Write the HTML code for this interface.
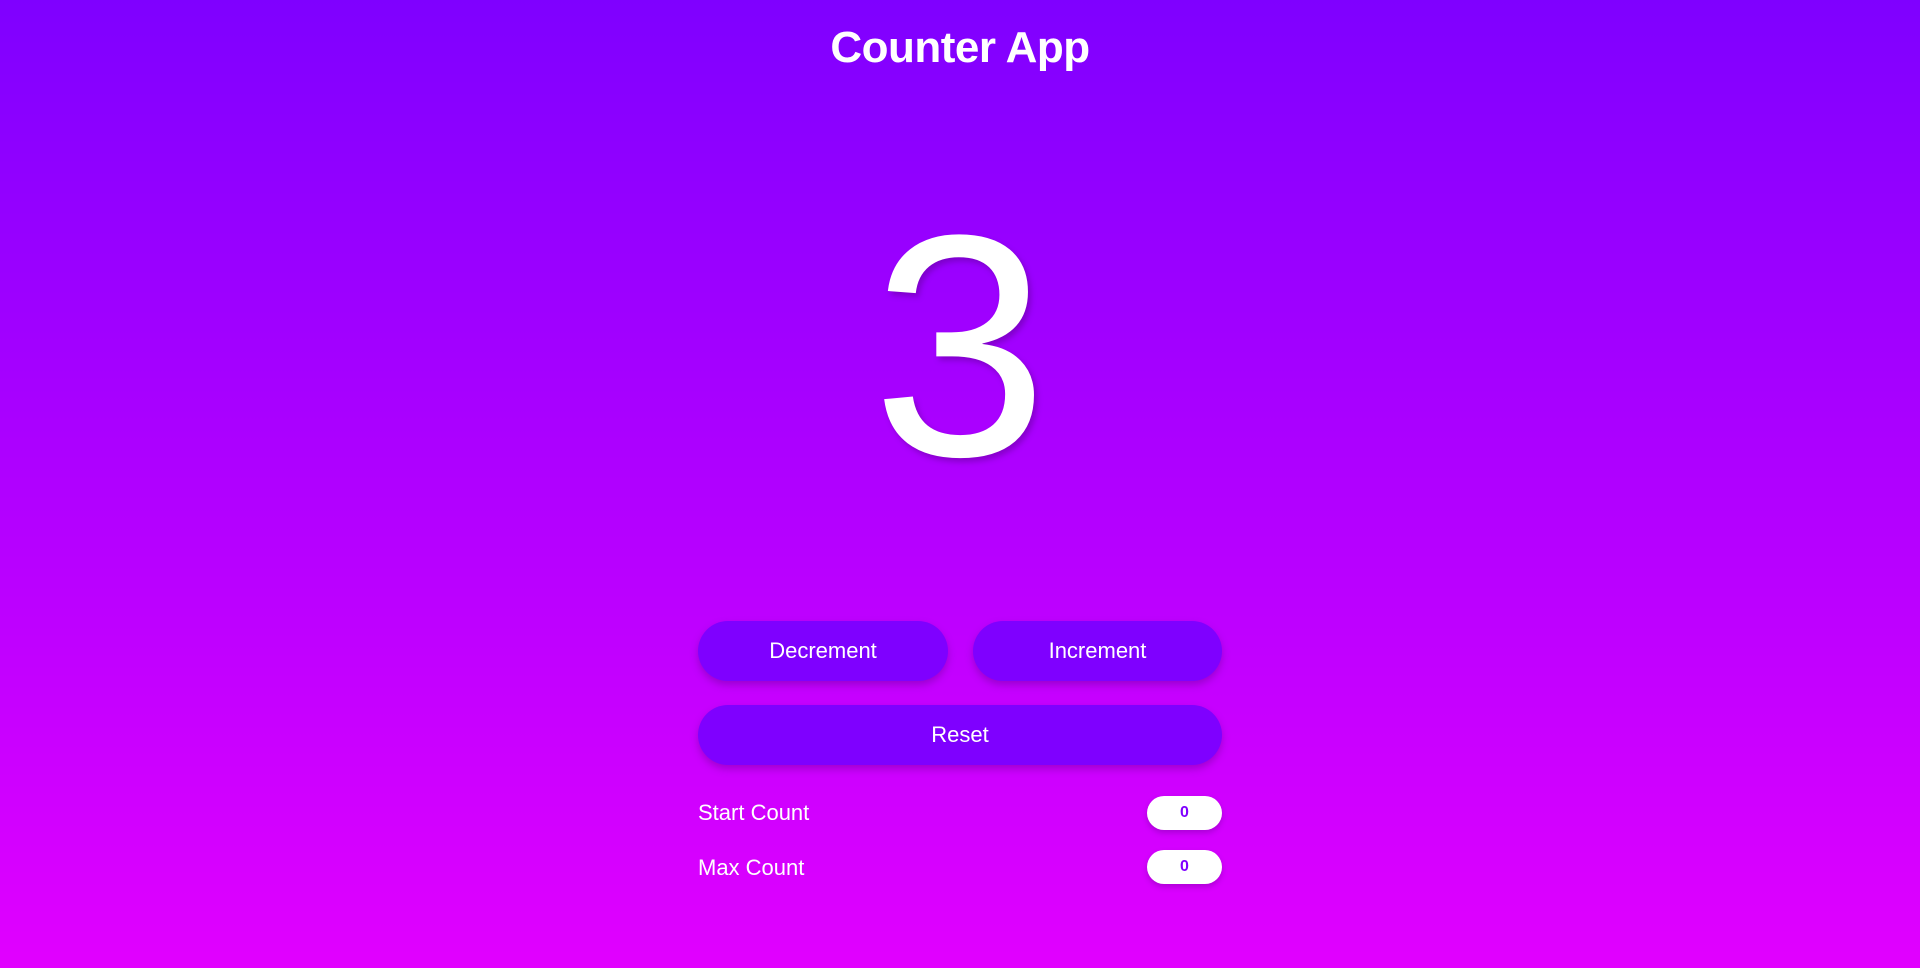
<!DOCTYPE html>
<html><head><meta charset="utf-8"><style>
html,body{margin:0;height:968px;width:1920px;overflow:hidden}
body{background:linear-gradient(#7f00ff,#e100ff);font-family:"Liberation Sans",sans-serif;color:#fff;position:relative}
h1{position:absolute;top:23px;left:0;width:1920px;text-align:center;margin:0;font-size:44px;font-weight:bold;letter-spacing:-0.5px}
.num{position:absolute;top:188px;left:0;width:1920px;text-align:center;font-size:316px;line-height:316px;text-shadow:3px 4px 6px rgba(90,0,140,.45)}
.btn{position:absolute;background:#7f00ff;border-radius:30px;height:60px;line-height:60px;text-align:center;font-size:22px;box-shadow:0 4px 8px rgba(80,0,120,.35)}
.lbl{position:absolute;left:698px;font-size:22px}
.inp{position:absolute;left:1147px;width:75px;height:34px;line-height:34px;background:#fff;border-radius:17px;color:#7f00ff;text-align:center;font-size:16px;font-weight:bold;box-shadow:0 3px 6px rgba(80,0,120,.3)}
</style></head><body>
<h1>Counter App</h1>
<div class="num">3</div>
<div class="btn" style="left:698px;top:621px;width:250px">Decrement</div>
<div class="btn" style="left:973px;top:621px;width:249px">Increment</div>
<div class="btn" style="left:698px;top:705px;width:524px">Reset</div>
<div class="lbl" style="top:800px">Start Count</div>
<div class="inp" style="top:796px">0</div>
<div class="lbl" style="top:855px">Max Count</div>
<div class="inp" style="top:850px">0</div>
</body></html>
